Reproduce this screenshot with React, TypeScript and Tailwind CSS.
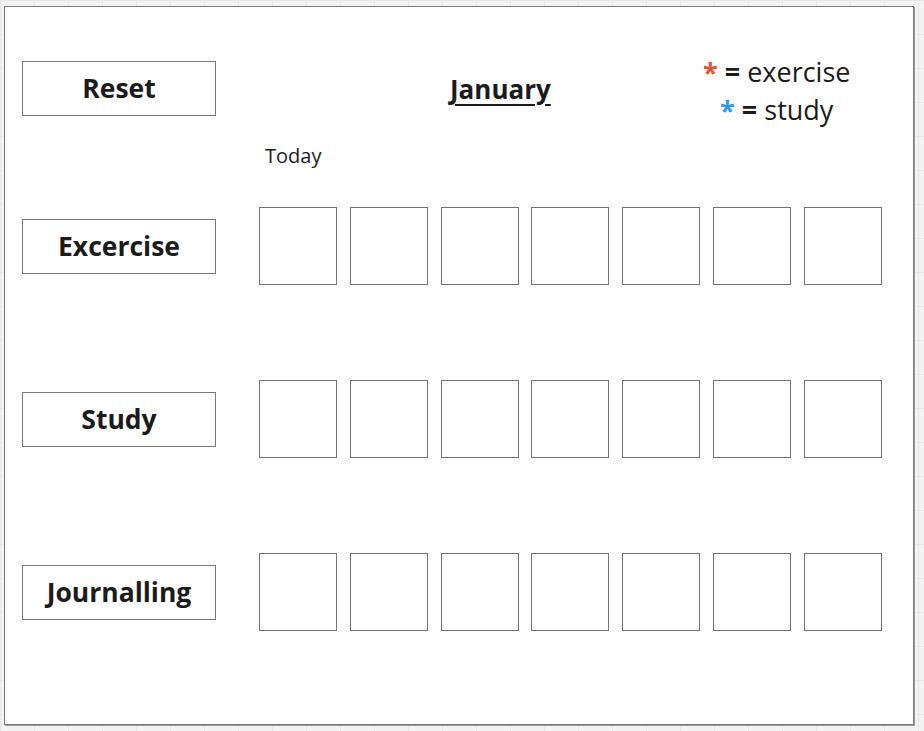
import React from "react";

const habits = ["Excercise", "Study", "Journalling"];
const days = [0, 1, 2, 3, 4, 5, 6];

function Label({ text }: { text: string }) {
  return (
    <div className="flex h-[55px] w-[194px] shrink-0 items-center justify-center border border-[#7a7a7a] bg-white text-[26.5px] leading-none font-bold text-[#1b1b1b]">
      {text}
    </div>
  );
}

function DayBox() {
  return <div className="h-[78px] w-[78px] border border-[#737373] bg-white" />;
}

export default function App() {
  return (
    <div
      className="h-[731px] w-full overflow-hidden bg-[#f3f3f3] bg-[linear-gradient(to_right,#e7e7e7_1px,transparent_1px),linear-gradient(to_bottom,#e7e7e7_1px,transparent_1px)] bg-[size:34px_34px] pt-[6px] pl-[4px]"
      style={{ fontFamily: '"Open Sans", "Noto Sans", sans-serif' }}
    >
      <div className="h-[719px] w-[910px] border border-[#7a7a7a] bg-white pl-[17px] shadow-[1px_1px_0_#9a9a9a]">
        {/* Header */}
        <div className="relative mt-[54px] flex h-[55px] items-center">
          <Label text="Reset" />
          <h1 className="ml-[234px] text-[26px] leading-none font-bold text-[#1b1b1b] underline decoration-2 underline-offset-[5px]">
            January
          </h1>
          <div className="absolute top-[-8px] left-[681px] flex flex-col items-center text-[27px] leading-[38px] text-[#1b1b1b]">
            <p>
              <span className="font-bold text-[#e8502f]">*</span>{" "}
              <span className="font-bold">=</span> exercise
            </p>
            <p>
              <span className="font-bold text-[#2f9ae6]">*</span>{" "}
              <span className="font-bold">=</span> study
            </p>
          </div>
        </div>

        <p className="mt-[30px] ml-[243px] text-[20px] leading-none text-[#1b1b1b]">Today</p>

        {/* Habit rows */}
        <div className="mt-[41px] flex flex-col gap-[95px]">
          {habits.map((h) => (
            <div key={h} className="flex items-center gap-[43px]">
              <Label text={h} />
              <div className="flex gap-[12.8px]">
                {days.map((d) => (
                  <DayBox key={d} />
                ))}
              </div>
            </div>
          ))}
        </div>
      </div>
    </div>
  );
}
